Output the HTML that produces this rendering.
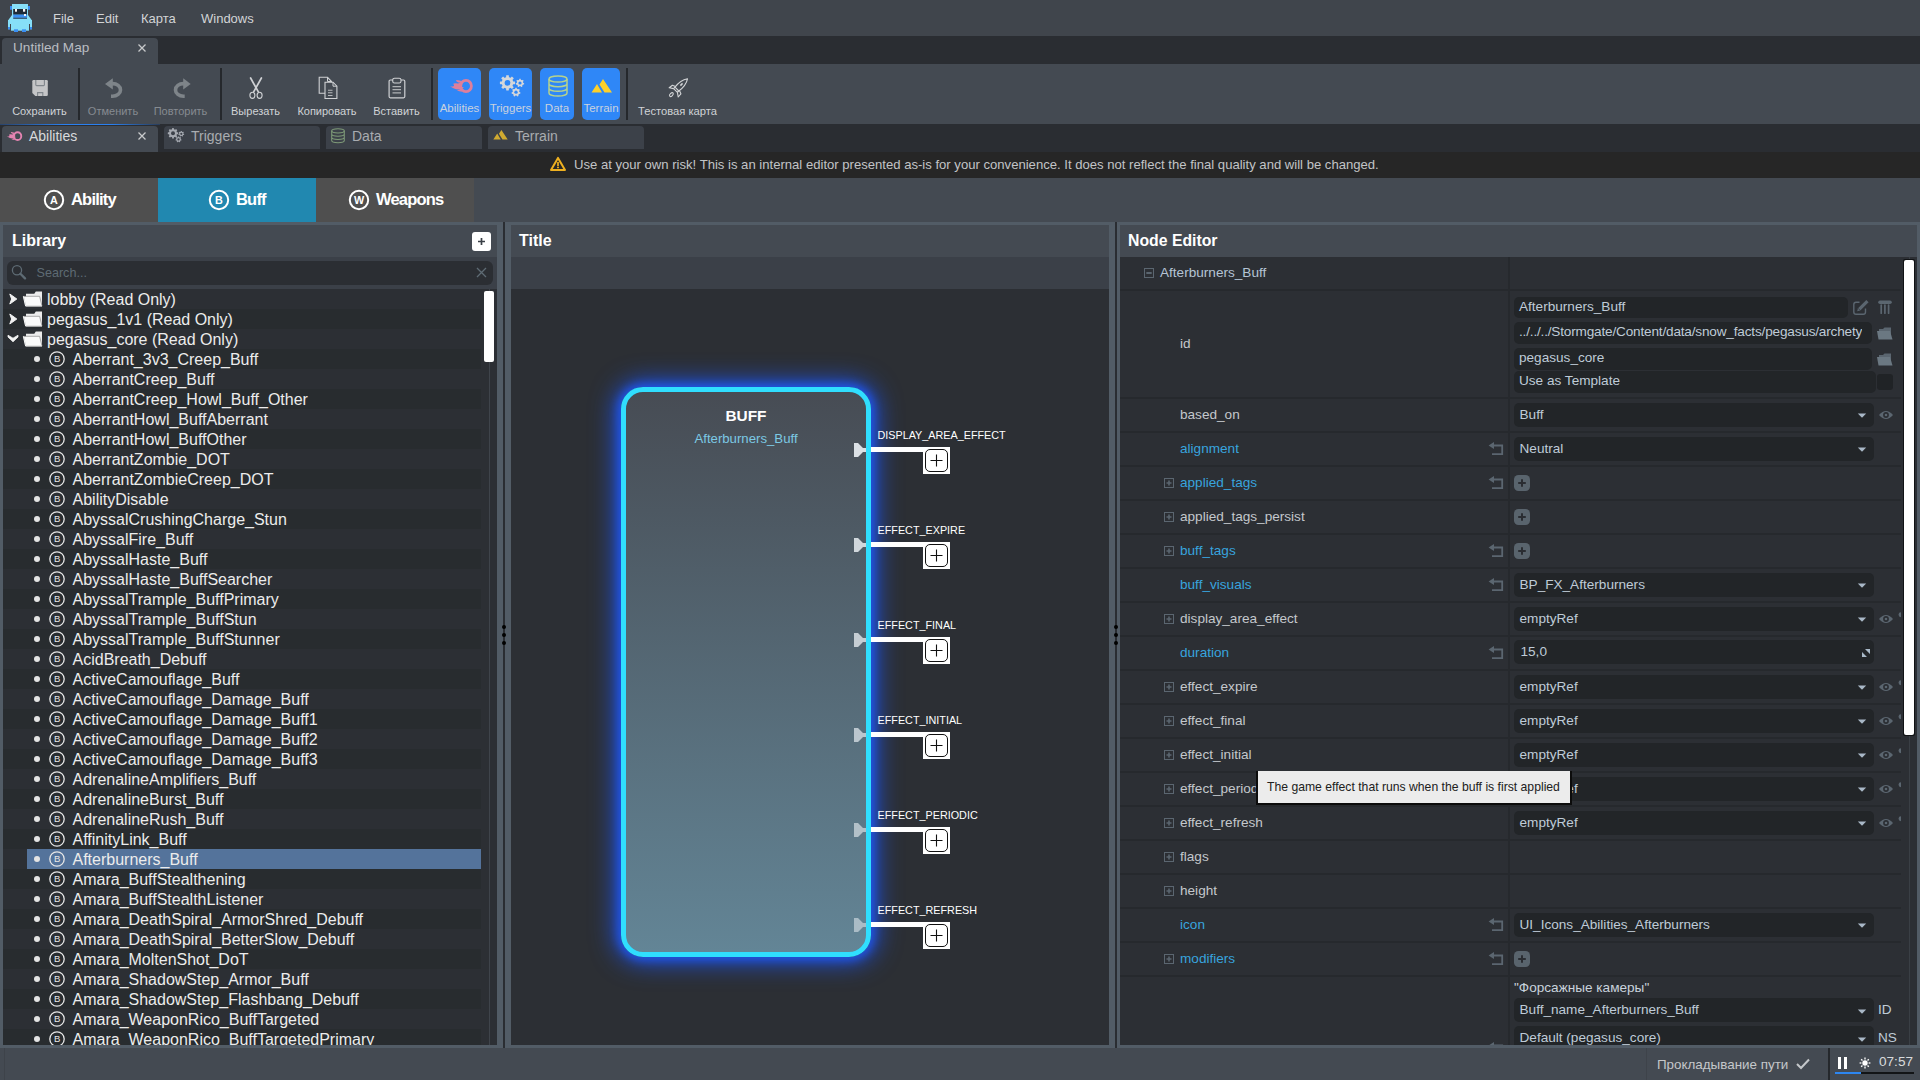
<!DOCTYPE html>
<html><head><meta charset="utf-8"><style>
html,body{margin:0;padding:0;width:1920px;height:1080px;overflow:hidden;background:#444a52;font-family:'Liberation Sans',sans-serif;}
div,svg{box-sizing:content-box}
</style></head><body>
<div style="position:absolute;left:0px;top:0px;width:1920px;height:36px;background:#40454c;"></div><svg style="position:absolute;left:8px;top:3px;" width="24" height="30" viewBox="0 0 24 30"><rect x="2" y="3" width="2" height="3.7" fill="#3a8ef2"/><rect x="20" y="3" width="2" height="3.7" fill="#3a8ef2"/><rect x="4" y="1" width="16" height="16.5" fill="#86dff8"/><polygon points="4,12 4,17.5 0,17.5" fill="#86dff8"/><polygon points="20,12 24,17.5 20,17.5" fill="#86dff8"/><rect x="0" y="17" width="24" height="9.3" fill="#86dff8"/><rect x="3" y="17" width="18" height="10.7" fill="#86dff8"/><rect x="2" y="21" width="1" height="7" fill="#40454c"/><rect x="21" y="21" width="1" height="7" fill="#40454c"/><rect x="0" y="24" width="2" height="2.3" fill="#3a8ef2"/><rect x="22" y="24" width="2" height="2.3" fill="#3a8ef2"/><rect x="6" y="26.3" width="4" height="2.7" fill="#3a8ef2"/><rect x="14" y="26.3" width="4" height="2.7" fill="#3a8ef2"/><rect x="5.2" y="6" width="13.8" height="5.7" fill="#1e2b37"/><rect x="7" y="6" width="2" height="2.7" fill="#f4f4f4"/><rect x="15" y="6" width="2.2" height="2.7" fill="#f4f4f4"/><rect x="5.2" y="11.7" width="13.8" height="3" fill="#3a8ef2"/><rect x="5.2" y="14.7" width="13.8" height="1" fill="#1c2a44"/><rect x="16" y="11" width="2" height="2" fill="#f4f4f4"/></svg><div style="position:absolute;left:53px;top:12.0px;font-size:13px;line-height:1;color:#d2d4d6;font-weight:400;white-space:pre;">File</div><div style="position:absolute;left:96px;top:12.0px;font-size:13px;line-height:1;color:#d2d4d6;font-weight:400;white-space:pre;">Edit</div><div style="position:absolute;left:141px;top:12.0px;font-size:13px;line-height:1;color:#d2d4d6;font-weight:400;white-space:pre;">Карта</div><div style="position:absolute;left:201px;top:12.0px;font-size:13px;line-height:1;color:#d2d4d6;font-weight:400;white-space:pre;">Windows</div><div style="position:absolute;left:0px;top:36px;width:1920px;height:28px;background:#2a2d32;"></div><div style="position:absolute;left:2px;top:38px;width:156px;height:26px;background:#444a52;border-radius:4px 4px 0 0;"></div><div style="position:absolute;left:13px;top:41.49px;font-size:13.6px;line-height:1;color:#b9bdc2;font-weight:400;white-space:pre;">Untitled Map</div><svg style="position:absolute;left:137px;top:42.5px;" width="10" height="10" viewBox="0 0 10 10"><path d="M1.5 1.5L8.5 8.5M8.5 1.5L1.5 8.5" stroke="#c8cacc" stroke-width="1.3"/></svg><div style="position:absolute;left:0px;top:64px;width:1920px;height:60px;background:#444a52;"></div><div style="position:absolute;left:78px;top:68px;width:2px;height:52px;background:#25282c;"></div><div style="position:absolute;left:220px;top:68px;width:2px;height:52px;background:#25282c;"></div><div style="position:absolute;left:431px;top:68px;width:2px;height:52px;background:#25282c;"></div><div style="position:absolute;left:626px;top:68px;width:2px;height:52px;background:#25282c;"></div><div style="position:absolute;left:-160.5px;width:400px;text-align:center;top:105.69px;font-size:11px;line-height:1;color:#d0d3d6;font-weight:400;white-space:pre">Сохранить</div><div style="position:absolute;left:-87.0px;width:400px;text-align:center;top:105.69px;font-size:11px;line-height:1;color:#868b91;font-weight:400;white-space:pre">Отменить</div><div style="position:absolute;left:-19.5px;width:400px;text-align:center;top:105.69px;font-size:11px;line-height:1;color:#868b91;font-weight:400;white-space:pre">Повторить</div><div style="position:absolute;left:55.5px;width:400px;text-align:center;top:105.69px;font-size:11px;line-height:1;color:#d0d3d6;font-weight:400;white-space:pre">Вырезать</div><div style="position:absolute;left:127.0px;width:400px;text-align:center;top:105.69px;font-size:11px;line-height:1;color:#d0d3d6;font-weight:400;white-space:pre">Копировать</div><div style="position:absolute;left:196.5px;width:400px;text-align:center;top:105.69px;font-size:11px;line-height:1;color:#d0d3d6;font-weight:400;white-space:pre">Вставить</div><div style="position:absolute;left:477.5px;width:400px;text-align:center;top:105.52px;font-size:11.2px;line-height:1;color:#d0d3d6;font-weight:400;white-space:pre">Тестовая карта</div><svg style="position:absolute;left:31px;top:79px;" width="18" height="18" viewBox="0 0 18 18"><path d="M1.3 2.2Q1.3 1 2.5 1H15.6Q16.8 1 16.8 2.2V15.8Q16.8 17 15.6 17H4.3L1.3 14Z" fill="#c4c5c7"/><path d="M4.8 1V5.8Q4.8 6.6 5.6 6.6H12.6Q13.4 6.6 13.4 5.8V1" stroke="#80868c" stroke-width="1.1" fill="none"/><path d="M6.6 17V13.6H11.8V17" stroke="#80868c" stroke-width="1.1" fill="none"/></svg><svg style="position:absolute;left:103px;top:76px;" width="24" height="24" viewBox="0 0 24 24"><path d="M7 7.6H9.5A8 6.3 0 0 1 9.5 20.2H8" stroke="#7e8489" stroke-width="3.6" fill="none"/><path d="M2 7.9L9.8 2.2V13.6Z" fill="#7e8489"/></svg><svg style="position:absolute;left:170px;top:76px;" width="24" height="24" viewBox="0 0 24 24"><path d="M16 7.6H13.5A8 6.3 0 0 0 13.5 20.2H14.7" stroke="#7e8489" stroke-width="3.6" fill="none"/><path d="M20.7 7.9L13.2 2.2V13.6Z" fill="#7e8489"/></svg><svg style="position:absolute;left:248px;top:76px;" width="16" height="24" viewBox="0 0 16 24"><path d="M2.6 2L10.2 15.6M13.4 2L5.8 15.6" stroke="#cfd1d4" stroke-width="1.7" stroke-linecap="round"/><ellipse cx="4.4" cy="19.3" rx="2.5" ry="3.1" stroke="#cfd1d4" stroke-width="1.1" fill="none"/><ellipse cx="11.6" cy="19.3" rx="2.5" ry="3.1" stroke="#cfd1d4" stroke-width="1.1" fill="none"/></svg><svg style="position:absolute;left:318px;top:76px;" width="20" height="24" viewBox="0 0 20 24"><path d="M1.2 1.3H9.5L13.6 5.5V17.2H1.2Z" stroke="#cfd1d4" stroke-width="1.1" fill="#444a52"/><path d="M9.5 1.3V5.5H13.6" stroke="#cfd1d4" stroke-width="1" fill="none"/><path d="M7 6.2H15L18.9 10.2V22.5H7Z" stroke="#cfd1d4" stroke-width="1.1" fill="#444a52"/><path d="M15 6.2V10.2H18.9" stroke="#cfd1d4" stroke-width="1" fill="none"/><path d="M10 14.2H14.5M10 16.8H14.5M10 19.5H14.5" stroke="#b6b9bc" stroke-width="1.1"/></svg><svg style="position:absolute;left:388px;top:77px;" width="18" height="22" viewBox="0 0 18 22"><rect x="1.1" y="3" width="15.7" height="17.8" rx="1.2" stroke="#cfd1d4" stroke-width="1.2" fill="none"/><rect x="4.7" y="1.2" width="8.3" height="4.8" rx="1.8" stroke="#cfd1d4" stroke-width="1.1" fill="#444a52"/><path d="M4.5 9.6H13M4.5 12.7H13M4.5 15.8H13" stroke="#aeb1b4" stroke-width="1.2"/></svg><div style="position:absolute;left:438px;top:68px;width:43px;height:52px;background:#2f87f7;border-radius:5px;"></div><div style="position:absolute;left:489px;top:68px;width:43px;height:52px;background:#2f87f7;border-radius:5px;"></div><div style="position:absolute;left:540px;top:68px;width:34px;height:52px;background:#2f87f7;border-radius:5px;"></div><div style="position:absolute;left:582px;top:68px;width:38px;height:52px;background:#2f87f7;border-radius:5px;"></div><div style="position:absolute;left:259.5px;width:400px;text-align:center;top:103.27px;font-size:11.5px;line-height:1;color:#c9d2de;font-weight:400;white-space:pre">Abilities</div><div style="position:absolute;left:310.5px;width:400px;text-align:center;top:103.27px;font-size:11.5px;line-height:1;color:#c9d2de;font-weight:400;white-space:pre">Triggers</div><div style="position:absolute;left:357.0px;width:400px;text-align:center;top:103.27px;font-size:11.5px;line-height:1;color:#c9d2de;font-weight:400;white-space:pre">Data</div><div style="position:absolute;left:401.0px;width:400px;text-align:center;top:103.27px;font-size:11.5px;line-height:1;color:#c9d2de;font-weight:400;white-space:pre">Terrain</div><svg style="position:absolute;left:446px;top:74px;" width="30" height="24" viewBox="0 0 30 24"><g transform="scale(1.0)" fill="#de7f9b"><ellipse cx="20" cy="12" rx="5.4" ry="5.7" stroke="#de7f9b" stroke-width="2.8" fill="none"/><path d="M10 6Q12.5 6.1 15.2 7L14.8 8.8Q12 8.6 10.6 7.4Z"/><path d="M7.5 9.6Q9.5 9.1 12 9.5L14.8 8.6L14.6 15.8L12.6 15.5Q9.5 15.2 8 14.4Q6 13.5 4 12.2Q6 12.5 7.6 12.3Q8.6 11.5 7.6 10.8Z"/><path d="M10.8 16.6Q12.5 16 14.4 15.4L16.2 17.8Q13 17.6 10.8 16.6Z"/><path d="M14.6 10.2L17.2 10.9L14.6 11.8ZM14.6 12.6L18.2 13.4L14.6 14.4Z"/></g></svg><svg style="position:absolute;left:498px;top:74px;" width="30" height="26" viewBox="0 0 30 26"><circle cx="9.5" cy="8.8" r="5.78" fill="#d5d7da"/><rect x="8.13" y="1.20" width="2.74" height="3.80" rx="0.41" fill="#d5d7da" transform="rotate(0.0 9.5 8.8)"/><rect x="8.13" y="1.20" width="2.74" height="3.80" rx="0.41" fill="#d5d7da" transform="rotate(45.0 9.5 8.8)"/><rect x="8.13" y="1.20" width="2.74" height="3.80" rx="0.41" fill="#d5d7da" transform="rotate(90.0 9.5 8.8)"/><rect x="8.13" y="1.20" width="2.74" height="3.80" rx="0.41" fill="#d5d7da" transform="rotate(135.0 9.5 8.8)"/><rect x="8.13" y="1.20" width="2.74" height="3.80" rx="0.41" fill="#d5d7da" transform="rotate(180.0 9.5 8.8)"/><rect x="8.13" y="1.20" width="2.74" height="3.80" rx="0.41" fill="#d5d7da" transform="rotate(225.0 9.5 8.8)"/><rect x="8.13" y="1.20" width="2.74" height="3.80" rx="0.41" fill="#d5d7da" transform="rotate(270.0 9.5 8.8)"/><rect x="8.13" y="1.20" width="2.74" height="3.80" rx="0.41" fill="#d5d7da" transform="rotate(315.0 9.5 8.8)"/><circle cx="9.5" cy="8.8" r="2.89" fill="#2f87f7"/><circle cx="22" cy="9" r="3.19" fill="#d5d7da"/><rect x="21.24" y="4.80" width="1.51" height="2.10" rx="0.23" fill="#d5d7da" transform="rotate(0.0 22 9)"/><rect x="21.24" y="4.80" width="1.51" height="2.10" rx="0.23" fill="#d5d7da" transform="rotate(51.4 22 9)"/><rect x="21.24" y="4.80" width="1.51" height="2.10" rx="0.23" fill="#d5d7da" transform="rotate(102.9 22 9)"/><rect x="21.24" y="4.80" width="1.51" height="2.10" rx="0.23" fill="#d5d7da" transform="rotate(154.3 22 9)"/><rect x="21.24" y="4.80" width="1.51" height="2.10" rx="0.23" fill="#d5d7da" transform="rotate(205.7 22 9)"/><rect x="21.24" y="4.80" width="1.51" height="2.10" rx="0.23" fill="#d5d7da" transform="rotate(257.1 22 9)"/><rect x="21.24" y="4.80" width="1.51" height="2.10" rx="0.23" fill="#d5d7da" transform="rotate(308.6 22 9)"/><circle cx="22" cy="9" r="1.60" fill="#2f87f7"/><circle cx="18" cy="18.2" r="3.34" fill="#d5d7da"/><rect x="17.21" y="13.80" width="1.58" height="2.20" rx="0.24" fill="#d5d7da" transform="rotate(0.0 18 18.2)"/><rect x="17.21" y="13.80" width="1.58" height="2.20" rx="0.24" fill="#d5d7da" transform="rotate(51.4 18 18.2)"/><rect x="17.21" y="13.80" width="1.58" height="2.20" rx="0.24" fill="#d5d7da" transform="rotate(102.9 18 18.2)"/><rect x="17.21" y="13.80" width="1.58" height="2.20" rx="0.24" fill="#d5d7da" transform="rotate(154.3 18 18.2)"/><rect x="17.21" y="13.80" width="1.58" height="2.20" rx="0.24" fill="#d5d7da" transform="rotate(205.7 18 18.2)"/><rect x="17.21" y="13.80" width="1.58" height="2.20" rx="0.24" fill="#d5d7da" transform="rotate(257.1 18 18.2)"/><rect x="17.21" y="13.80" width="1.58" height="2.20" rx="0.24" fill="#d5d7da" transform="rotate(308.6 18 18.2)"/><circle cx="18" cy="18.2" r="1.67" fill="#2f87f7"/></svg><svg style="position:absolute;left:548px;top:75px;" width="21" height="24" viewBox="0 0 21 24"><ellipse cx="10" cy="4" rx="9" ry="3" stroke="#b5d28e" stroke-width="1.5" fill="none"/><path d="M1 4V18A9 3 0 0 0 19 18V16M1 8.7A9 3 0 0 0 19 8.7M1 13.3A9 3 0 0 0 19 13.3M19 4V16" stroke="#b5d28e" stroke-width="1.5" fill="none"/></svg><svg style="position:absolute;left:591px;top:79px;" width="22" height="14" viewBox="0 0 22 14"><path d="M0.5 13.5L6 5L11 13.5Z M8.5 5.5L12 0L21 13.5L13.5 13.5Z" fill="#fdd02b"/></svg><svg style="position:absolute;left:668px;top:78px;" width="21" height="21" viewBox="0 0 21 21"><g stroke="#d2d4d6" stroke-width="1.1" fill="none" stroke-linejoin="round"><path d="M19.5 0.8C15 1.6 10.5 4.6 7 9.2L10.8 13C15.4 9.5 18.6 5.2 19.5 0.8Z"/><path d="M7 9.2L5.6 10.6L9.4 14.4L10.8 13"/><path d="M7.4 8.6L4.4 7.2L1.2 9.8L5.6 10.6"/><path d="M11.4 12.6L12.9 15.8L10.2 19L9.4 14.4"/><ellipse cx="3.4" cy="16.6" rx="2.3" ry="1.3" transform="rotate(-45 3.4 16.6)"/><path d="M12.4 7.6L14.6 5.4" stroke-width="1.5"/></g></svg><div style="position:absolute;left:0px;top:124px;width:1920px;height:28px;background:#2a2d32;"></div><div style="position:absolute;left:0;top:124px;width:160px;height:1px;background:linear-gradient(90deg,rgba(40,120,240,0.3),#2a80f0 40%,#2a80f0 70%,rgba(40,120,240,0.2))"></div><div style="position:absolute;left:2px;top:126px;width:156px;height:26px;background:#444a52;border-radius:4px 4px 0 0;"></div><div style="position:absolute;left:164px;top:126px;width:156px;height:23px;background:#3c4149;border-radius:4px 4px 0 0;"></div><div style="position:absolute;left:326px;top:126px;width:156px;height:23px;background:#3c4149;border-radius:4px 4px 0 0;"></div><div style="position:absolute;left:488px;top:126px;width:156px;height:23px;background:#3c4149;border-radius:4px 4px 0 0;"></div><svg style="position:absolute;left:4px;top:128px;" width="20" height="16" viewBox="0 0 20 16"><g transform="scale(0.68)" fill="#e584b2"><ellipse cx="20" cy="12" rx="5.4" ry="5.7" stroke="#e584b2" stroke-width="2.8" fill="none"/><path d="M10 6Q12.5 6.1 15.2 7L14.8 8.8Q12 8.6 10.6 7.4Z"/><path d="M7.5 9.6Q9.5 9.1 12 9.5L14.8 8.6L14.6 15.8L12.6 15.5Q9.5 15.2 8 14.4Q6 13.5 4 12.2Q6 12.5 7.6 12.3Q8.6 11.5 7.6 10.8Z"/><path d="M10.8 16.6Q12.5 16 14.4 15.4L16.2 17.8Q13 17.6 10.8 16.6Z"/><path d="M14.6 10.2L17.2 10.9L14.6 11.8ZM14.6 12.6L18.2 13.4L14.6 14.4Z"/></g></svg><div style="position:absolute;left:29px;top:129.15px;font-size:14px;line-height:1;color:#d8dadc;font-weight:400;white-space:pre;">Abilities</div><svg style="position:absolute;left:137px;top:130.5px;" width="10" height="10" viewBox="0 0 10 10"><path d="M1.5 1.5L8.5 8.5M8.5 1.5L1.5 8.5" stroke="#c8cacc" stroke-width="1.3"/></svg><svg style="position:absolute;left:166px;top:127px;" width="20" height="17" viewBox="0 0 20 17"><circle cx="7" cy="6.3" r="3.95" fill="#a5a9b0"/><rect x="6.06" y="1.10" width="1.87" height="2.60" rx="0.28" fill="#a5a9b0" transform="rotate(0.0 7 6.3)"/><rect x="6.06" y="1.10" width="1.87" height="2.60" rx="0.28" fill="#a5a9b0" transform="rotate(45.0 7 6.3)"/><rect x="6.06" y="1.10" width="1.87" height="2.60" rx="0.28" fill="#a5a9b0" transform="rotate(90.0 7 6.3)"/><rect x="6.06" y="1.10" width="1.87" height="2.60" rx="0.28" fill="#a5a9b0" transform="rotate(135.0 7 6.3)"/><rect x="6.06" y="1.10" width="1.87" height="2.60" rx="0.28" fill="#a5a9b0" transform="rotate(180.0 7 6.3)"/><rect x="6.06" y="1.10" width="1.87" height="2.60" rx="0.28" fill="#a5a9b0" transform="rotate(225.0 7 6.3)"/><rect x="6.06" y="1.10" width="1.87" height="2.60" rx="0.28" fill="#a5a9b0" transform="rotate(270.0 7 6.3)"/><rect x="6.06" y="1.10" width="1.87" height="2.60" rx="0.28" fill="#a5a9b0" transform="rotate(315.0 7 6.3)"/><circle cx="7" cy="6.3" r="1.98" fill="#3c4149"/><circle cx="15.3" cy="6.8" r="2.20" fill="#a5a9b0"/><rect x="14.78" y="3.90" width="1.04" height="1.45" rx="0.16" fill="#a5a9b0" transform="rotate(0.0 15.3 6.8)"/><rect x="14.78" y="3.90" width="1.04" height="1.45" rx="0.16" fill="#a5a9b0" transform="rotate(51.4 15.3 6.8)"/><rect x="14.78" y="3.90" width="1.04" height="1.45" rx="0.16" fill="#a5a9b0" transform="rotate(102.9 15.3 6.8)"/><rect x="14.78" y="3.90" width="1.04" height="1.45" rx="0.16" fill="#a5a9b0" transform="rotate(154.3 15.3 6.8)"/><rect x="14.78" y="3.90" width="1.04" height="1.45" rx="0.16" fill="#a5a9b0" transform="rotate(205.7 15.3 6.8)"/><rect x="14.78" y="3.90" width="1.04" height="1.45" rx="0.16" fill="#a5a9b0" transform="rotate(257.1 15.3 6.8)"/><rect x="14.78" y="3.90" width="1.04" height="1.45" rx="0.16" fill="#a5a9b0" transform="rotate(308.6 15.3 6.8)"/><circle cx="15.3" cy="6.8" r="1.10" fill="#3c4149"/><circle cx="12.5" cy="12.4" r="2.28" fill="#a5a9b0"/><rect x="11.96" y="9.40" width="1.08" height="1.50" rx="0.16" fill="#a5a9b0" transform="rotate(0.0 12.5 12.4)"/><rect x="11.96" y="9.40" width="1.08" height="1.50" rx="0.16" fill="#a5a9b0" transform="rotate(51.4 12.5 12.4)"/><rect x="11.96" y="9.40" width="1.08" height="1.50" rx="0.16" fill="#a5a9b0" transform="rotate(102.9 12.5 12.4)"/><rect x="11.96" y="9.40" width="1.08" height="1.50" rx="0.16" fill="#a5a9b0" transform="rotate(154.3 12.5 12.4)"/><rect x="11.96" y="9.40" width="1.08" height="1.50" rx="0.16" fill="#a5a9b0" transform="rotate(205.7 12.5 12.4)"/><rect x="11.96" y="9.40" width="1.08" height="1.50" rx="0.16" fill="#a5a9b0" transform="rotate(257.1 12.5 12.4)"/><rect x="11.96" y="9.40" width="1.08" height="1.50" rx="0.16" fill="#a5a9b0" transform="rotate(308.6 12.5 12.4)"/><circle cx="12.5" cy="12.4" r="1.14" fill="#3c4149"/></svg><div style="position:absolute;left:191px;top:129.15px;font-size:14px;line-height:1;color:#a9acb0;font-weight:400;white-space:pre;">Triggers</div><svg style="position:absolute;left:330px;top:127px;" width="16" height="17" viewBox="0 0 16 17"><g transform="translate(1,1) scale(0.7)"><ellipse cx="10" cy="4" rx="9" ry="3" stroke="#7e9a78" stroke-width="1.5" fill="none"/><path d="M1 4V18A9 3 0 0 0 19 18V16M1 8.7A9 3 0 0 0 19 8.7M1 13.3A9 3 0 0 0 19 13.3M19 4V16" stroke="#7e9a78" stroke-width="1.5" fill="none"/></g></svg><div style="position:absolute;left:352px;top:129.15px;font-size:14px;line-height:1;color:#a9acb0;font-weight:400;white-space:pre;">Data</div><svg style="position:absolute;left:493px;top:130px;" width="15" height="10" viewBox="0 0 15 10"><path d="M0.35 9.45L4.199999999999999 3.5L7.699999999999999 9.45Z M5.949999999999999 3.8499999999999996L8.399999999999999 0L14.7 9.45L9.45 9.45Z" fill="#d0aa30"/></svg><div style="position:absolute;left:515px;top:129.15px;font-size:14px;line-height:1;color:#a9acb0;font-weight:400;white-space:pre;">Terrain</div><div style="position:absolute;left:0px;top:152px;width:1920px;height:26px;background:#262626;"></div><svg style="position:absolute;left:549px;top:155px;" width="18" height="17" viewBox="0 0 18 17"><path d="M9 2.9L16 15H2Z" stroke="#eeb020" stroke-width="2" fill="none" stroke-linejoin="round"/><path d="M9 7V11.2" stroke="#eeb020" stroke-width="1.7"/><ellipse cx="9" cy="12.6" rx="1.1" ry="0.8" fill="#eeb020"/></svg><div style="position:absolute;left:574px;top:157.91px;font-size:13.1px;line-height:1;color:#c2c4c6;font-weight:400;white-space:pre;">Use at your own risk! This is an internal editor presented as-is for your convenience. It does not reflect the final quality and will be changed.</div><div style="position:absolute;left:0px;top:178px;width:1920px;height:44px;background:#444a52;"></div><div style="position:absolute;left:0px;top:178px;width:158px;height:44px;background:#4f4f4f;"></div><div style="position:absolute;left:158px;top:178px;width:158px;height:44px;background:#2188b0;"></div><div style="position:absolute;left:316px;top:178px;width:158px;height:44px;background:#4f4f4f;"></div><svg style="position:absolute;left:43px;top:189px;" width="22" height="22" viewBox="0 0 22 22"><circle cx="11" cy="11" r="9.2" stroke="#fff" stroke-width="2" fill="none"/><text x="11" y="14.9" text-anchor="middle" font-family="Liberation Sans" font-size="10.8" font-weight="700" fill="#fff">A</text></svg><div style="position:absolute;left:71px;top:191.03px;font-size:16.5px;line-height:1;color:#ffffff;font-weight:700;white-space:pre;letter-spacing:-0.8px;">Ability</div><svg style="position:absolute;left:208px;top:189px;" width="22" height="22" viewBox="0 0 22 22"><circle cx="11" cy="11" r="9.2" stroke="#fff" stroke-width="2" fill="none"/><text x="11" y="14.9" text-anchor="middle" font-family="Liberation Sans" font-size="10.8" font-weight="700" fill="#fff">B</text></svg><div style="position:absolute;left:236px;top:191.03px;font-size:16.5px;line-height:1;color:#ffffff;font-weight:700;white-space:pre;letter-spacing:-0.8px;">Buff</div><svg style="position:absolute;left:348px;top:189px;" width="22" height="22" viewBox="0 0 22 22"><circle cx="11" cy="11" r="9.2" stroke="#fff" stroke-width="2" fill="none"/><text x="11" y="14.9" text-anchor="middle" font-family="Liberation Sans" font-size="10.8" font-weight="700" fill="#fff">W</text></svg><div style="position:absolute;left:376px;top:191.03px;font-size:16.5px;line-height:1;color:#ffffff;font-weight:700;white-space:pre;letter-spacing:-0.8px;">Weapons</div><div style="position:absolute;left:0px;top:222px;width:1920px;height:826px;background:#525c66;"></div><div style="position:absolute;left:503px;top:222px;width:2px;height:826px;background:#2a2d32;"></div><div style="position:absolute;left:1115px;top:222px;width:2px;height:826px;background:#2a2d32;"></div><div style="position:absolute;left:502px;top:625px;width:4px;height:4px;background:#000;border-radius:50%;"></div><div style="position:absolute;left:1114px;top:625px;width:4px;height:4px;background:#000;border-radius:50%;"></div><div style="position:absolute;left:502px;top:633px;width:4px;height:4px;background:#000;border-radius:50%;"></div><div style="position:absolute;left:1114px;top:633px;width:4px;height:4px;background:#000;border-radius:50%;"></div><div style="position:absolute;left:502px;top:641px;width:4px;height:4px;background:#000;border-radius:50%;"></div><div style="position:absolute;left:1114px;top:641px;width:4px;height:4px;background:#000;border-radius:50%;"></div><div style="position:absolute;left:3px;top:225px;width:494px;height:32px;background:#444a52;"></div><div style="position:absolute;left:12px;top:233.46px;font-size:16px;line-height:1;color:#ffffff;font-weight:700;white-space:pre;">Library</div><div style="position:absolute;left:472px;top:232px;width:19px;height:19px;background:#ffffff;border-radius:3px;"></div><svg style="position:absolute;left:472px;top:232px;" width="19" height="19" viewBox="0 0 19 19"><path d="M9.5 6V13M6 9.5H13" stroke="#3a3f46" stroke-width="1.7"/></svg><div style="position:absolute;left:3px;top:257px;width:494px;height:32px;background:#3b4048;"></div><div style="position:absolute;left:7px;top:261px;width:486px;height:24px;background:#2b2e33;border-radius:6px;"></div><svg style="position:absolute;left:11px;top:264px;" width="16" height="16" viewBox="0 0 16 16"><circle cx="6" cy="6.2" r="4.6" stroke="#5e6b74" stroke-width="1.3" fill="none"/><path d="M9.4 9.8L14 14.4" stroke="#5e6b74" stroke-width="2.3" stroke-linecap="round"/></svg><div style="position:absolute;left:36.5px;top:267.33px;font-size:12.6px;line-height:1;color:#5e6b74;font-weight:400;white-space:pre;">Search...</div><svg style="position:absolute;left:476px;top:267px;" width="11" height="11" viewBox="0 0 11 11"><path d="M1 1L10 10M10 1L1 10" stroke="#5e6b74" stroke-width="1.3"/></svg><div style="position:absolute;left:3px;top:289px;width:494px;height:756px;background:#2c2f34;"></div><div style="position:absolute;left:3px;top:289px;width:494px;height:756px;overflow:hidden"><div style="position:absolute;left:0;top:0px;width:478px;height:20px;background:#2c2f34"></div><svg style="position:absolute;left:6px;top:4px" width="10" height="12"><path d="M0.8 1L7.8 6L0.8 11L2.6 6Z" fill="#f2f2f2" stroke="#f2f2f2" stroke-width="1" stroke-linejoin="round"/></svg><svg style="position:absolute;left:17px;top:2px" width="23" height="17"><path d="M6 14V2.7H14.3L15.8 0.4H22V14Z" fill="#ececec"/><path d="M3.4 5.3H19.6L22 15H5.6Z" fill="#fafafa" stroke="#8a8a8a" stroke-width="0.7"/><path d="M3.4 5.3L5.6 15H22" stroke="#fafafa" stroke-width="1" fill="none"/></svg><div style="position:absolute;left:44px;top:3.26px;font-size:16px;line-height:1;color:#ececec;white-space:pre">lobby (Read Only)</div><div style="position:absolute;left:0;top:20px;width:478px;height:20px;background:#282c2f"></div><svg style="position:absolute;left:6px;top:24px" width="10" height="12"><path d="M0.8 1L7.8 6L0.8 11L2.6 6Z" fill="#f2f2f2" stroke="#f2f2f2" stroke-width="1" stroke-linejoin="round"/></svg><svg style="position:absolute;left:17px;top:22px" width="23" height="17"><path d="M6 14V2.7H14.3L15.8 0.4H22V14Z" fill="#ececec"/><path d="M3.4 5.3H19.6L22 15H5.6Z" fill="#fafafa" stroke="#8a8a8a" stroke-width="0.7"/><path d="M3.4 5.3L5.6 15H22" stroke="#fafafa" stroke-width="1" fill="none"/></svg><div style="position:absolute;left:44px;top:23.26px;font-size:16px;line-height:1;color:#ececec;white-space:pre">pegasus_1v1 (Read Only)</div><div style="position:absolute;left:0;top:40px;width:478px;height:20px;background:#2c2f34"></div><svg style="position:absolute;left:4px;top:45px" width="12" height="9"><path d="M1 1.2L6 4.2L11 1.2V3L6 7.8L1 3Z" fill="#f4f4f4" stroke="#f4f4f4" stroke-width="0.8" stroke-linejoin="round"/></svg><svg style="position:absolute;left:17px;top:42px" width="23" height="17"><path d="M6 14V2.7H14.3L15.8 0.4H22V14Z" fill="#ececec"/><path d="M3.4 5.3H19.6L22 15H5.6Z" fill="#fafafa" stroke="#8a8a8a" stroke-width="0.7"/><path d="M3.4 5.3L5.6 15H22" stroke="#fafafa" stroke-width="1" fill="none"/></svg><div style="position:absolute;left:44px;top:43.26px;font-size:16px;line-height:1;color:#ececec;white-space:pre">pegasus_core (Read Only)</div><div style="position:absolute;left:0;top:60px;width:478px;height:20px;background:#282c2f"></div><div style="position:absolute;left:31px;top:67px;width:6px;height:6px;border-radius:50%;background:#e4e4e4"></div><svg style="position:absolute;left:46px;top:62px" width="16" height="16"><circle cx="8" cy="8" r="7.2" stroke="#e8e8e8" stroke-width="1.3" fill="none"/><text x="8.1" y="11.4" text-anchor="middle" font-family="Liberation Sans" font-size="9.5" font-weight="400" fill="#e8e8e8">B</text></svg><div style="position:absolute;left:69.5px;top:63.26px;font-size:16px;line-height:1;color:#ececec;white-space:pre">Aberrant_3v3_Creep_Buff</div><div style="position:absolute;left:0;top:80px;width:478px;height:20px;background:#2c2f34"></div><div style="position:absolute;left:31px;top:87px;width:6px;height:6px;border-radius:50%;background:#e4e4e4"></div><svg style="position:absolute;left:46px;top:82px" width="16" height="16"><circle cx="8" cy="8" r="7.2" stroke="#e8e8e8" stroke-width="1.3" fill="none"/><text x="8.1" y="11.4" text-anchor="middle" font-family="Liberation Sans" font-size="9.5" font-weight="400" fill="#e8e8e8">B</text></svg><div style="position:absolute;left:69.5px;top:83.26px;font-size:16px;line-height:1;color:#ececec;white-space:pre">AberrantCreep_Buff</div><div style="position:absolute;left:0;top:100px;width:478px;height:20px;background:#282c2f"></div><div style="position:absolute;left:31px;top:107px;width:6px;height:6px;border-radius:50%;background:#e4e4e4"></div><svg style="position:absolute;left:46px;top:102px" width="16" height="16"><circle cx="8" cy="8" r="7.2" stroke="#e8e8e8" stroke-width="1.3" fill="none"/><text x="8.1" y="11.4" text-anchor="middle" font-family="Liberation Sans" font-size="9.5" font-weight="400" fill="#e8e8e8">B</text></svg><div style="position:absolute;left:69.5px;top:103.26px;font-size:16px;line-height:1;color:#ececec;white-space:pre">AberrantCreep_Howl_Buff_Other</div><div style="position:absolute;left:0;top:120px;width:478px;height:20px;background:#2c2f34"></div><div style="position:absolute;left:31px;top:127px;width:6px;height:6px;border-radius:50%;background:#e4e4e4"></div><svg style="position:absolute;left:46px;top:122px" width="16" height="16"><circle cx="8" cy="8" r="7.2" stroke="#e8e8e8" stroke-width="1.3" fill="none"/><text x="8.1" y="11.4" text-anchor="middle" font-family="Liberation Sans" font-size="9.5" font-weight="400" fill="#e8e8e8">B</text></svg><div style="position:absolute;left:69.5px;top:123.26px;font-size:16px;line-height:1;color:#ececec;white-space:pre">AberrantHowl_BuffAberrant</div><div style="position:absolute;left:0;top:140px;width:478px;height:20px;background:#282c2f"></div><div style="position:absolute;left:31px;top:147px;width:6px;height:6px;border-radius:50%;background:#e4e4e4"></div><svg style="position:absolute;left:46px;top:142px" width="16" height="16"><circle cx="8" cy="8" r="7.2" stroke="#e8e8e8" stroke-width="1.3" fill="none"/><text x="8.1" y="11.4" text-anchor="middle" font-family="Liberation Sans" font-size="9.5" font-weight="400" fill="#e8e8e8">B</text></svg><div style="position:absolute;left:69.5px;top:143.26px;font-size:16px;line-height:1;color:#ececec;white-space:pre">AberrantHowl_BuffOther</div><div style="position:absolute;left:0;top:160px;width:478px;height:20px;background:#2c2f34"></div><div style="position:absolute;left:31px;top:167px;width:6px;height:6px;border-radius:50%;background:#e4e4e4"></div><svg style="position:absolute;left:46px;top:162px" width="16" height="16"><circle cx="8" cy="8" r="7.2" stroke="#e8e8e8" stroke-width="1.3" fill="none"/><text x="8.1" y="11.4" text-anchor="middle" font-family="Liberation Sans" font-size="9.5" font-weight="400" fill="#e8e8e8">B</text></svg><div style="position:absolute;left:69.5px;top:163.26px;font-size:16px;line-height:1;color:#ececec;white-space:pre">AberrantZombie_DOT</div><div style="position:absolute;left:0;top:180px;width:478px;height:20px;background:#282c2f"></div><div style="position:absolute;left:31px;top:187px;width:6px;height:6px;border-radius:50%;background:#e4e4e4"></div><svg style="position:absolute;left:46px;top:182px" width="16" height="16"><circle cx="8" cy="8" r="7.2" stroke="#e8e8e8" stroke-width="1.3" fill="none"/><text x="8.1" y="11.4" text-anchor="middle" font-family="Liberation Sans" font-size="9.5" font-weight="400" fill="#e8e8e8">B</text></svg><div style="position:absolute;left:69.5px;top:183.26px;font-size:16px;line-height:1;color:#ececec;white-space:pre">AberrantZombieCreep_DOT</div><div style="position:absolute;left:0;top:200px;width:478px;height:20px;background:#2c2f34"></div><div style="position:absolute;left:31px;top:207px;width:6px;height:6px;border-radius:50%;background:#e4e4e4"></div><svg style="position:absolute;left:46px;top:202px" width="16" height="16"><circle cx="8" cy="8" r="7.2" stroke="#e8e8e8" stroke-width="1.3" fill="none"/><text x="8.1" y="11.4" text-anchor="middle" font-family="Liberation Sans" font-size="9.5" font-weight="400" fill="#e8e8e8">B</text></svg><div style="position:absolute;left:69.5px;top:203.26px;font-size:16px;line-height:1;color:#ececec;white-space:pre">AbilityDisable</div><div style="position:absolute;left:0;top:220px;width:478px;height:20px;background:#282c2f"></div><div style="position:absolute;left:31px;top:227px;width:6px;height:6px;border-radius:50%;background:#e4e4e4"></div><svg style="position:absolute;left:46px;top:222px" width="16" height="16"><circle cx="8" cy="8" r="7.2" stroke="#e8e8e8" stroke-width="1.3" fill="none"/><text x="8.1" y="11.4" text-anchor="middle" font-family="Liberation Sans" font-size="9.5" font-weight="400" fill="#e8e8e8">B</text></svg><div style="position:absolute;left:69.5px;top:223.26px;font-size:16px;line-height:1;color:#ececec;white-space:pre">AbyssalCrushingCharge_Stun</div><div style="position:absolute;left:0;top:240px;width:478px;height:20px;background:#2c2f34"></div><div style="position:absolute;left:31px;top:247px;width:6px;height:6px;border-radius:50%;background:#e4e4e4"></div><svg style="position:absolute;left:46px;top:242px" width="16" height="16"><circle cx="8" cy="8" r="7.2" stroke="#e8e8e8" stroke-width="1.3" fill="none"/><text x="8.1" y="11.4" text-anchor="middle" font-family="Liberation Sans" font-size="9.5" font-weight="400" fill="#e8e8e8">B</text></svg><div style="position:absolute;left:69.5px;top:243.26px;font-size:16px;line-height:1;color:#ececec;white-space:pre">AbyssalFire_Buff</div><div style="position:absolute;left:0;top:260px;width:478px;height:20px;background:#282c2f"></div><div style="position:absolute;left:31px;top:267px;width:6px;height:6px;border-radius:50%;background:#e4e4e4"></div><svg style="position:absolute;left:46px;top:262px" width="16" height="16"><circle cx="8" cy="8" r="7.2" stroke="#e8e8e8" stroke-width="1.3" fill="none"/><text x="8.1" y="11.4" text-anchor="middle" font-family="Liberation Sans" font-size="9.5" font-weight="400" fill="#e8e8e8">B</text></svg><div style="position:absolute;left:69.5px;top:263.26px;font-size:16px;line-height:1;color:#ececec;white-space:pre">AbyssalHaste_Buff</div><div style="position:absolute;left:0;top:280px;width:478px;height:20px;background:#2c2f34"></div><div style="position:absolute;left:31px;top:287px;width:6px;height:6px;border-radius:50%;background:#e4e4e4"></div><svg style="position:absolute;left:46px;top:282px" width="16" height="16"><circle cx="8" cy="8" r="7.2" stroke="#e8e8e8" stroke-width="1.3" fill="none"/><text x="8.1" y="11.4" text-anchor="middle" font-family="Liberation Sans" font-size="9.5" font-weight="400" fill="#e8e8e8">B</text></svg><div style="position:absolute;left:69.5px;top:283.26px;font-size:16px;line-height:1;color:#ececec;white-space:pre">AbyssalHaste_BuffSearcher</div><div style="position:absolute;left:0;top:300px;width:478px;height:20px;background:#282c2f"></div><div style="position:absolute;left:31px;top:307px;width:6px;height:6px;border-radius:50%;background:#e4e4e4"></div><svg style="position:absolute;left:46px;top:302px" width="16" height="16"><circle cx="8" cy="8" r="7.2" stroke="#e8e8e8" stroke-width="1.3" fill="none"/><text x="8.1" y="11.4" text-anchor="middle" font-family="Liberation Sans" font-size="9.5" font-weight="400" fill="#e8e8e8">B</text></svg><div style="position:absolute;left:69.5px;top:303.26px;font-size:16px;line-height:1;color:#ececec;white-space:pre">AbyssalTrample_BuffPrimary</div><div style="position:absolute;left:0;top:320px;width:478px;height:20px;background:#2c2f34"></div><div style="position:absolute;left:31px;top:327px;width:6px;height:6px;border-radius:50%;background:#e4e4e4"></div><svg style="position:absolute;left:46px;top:322px" width="16" height="16"><circle cx="8" cy="8" r="7.2" stroke="#e8e8e8" stroke-width="1.3" fill="none"/><text x="8.1" y="11.4" text-anchor="middle" font-family="Liberation Sans" font-size="9.5" font-weight="400" fill="#e8e8e8">B</text></svg><div style="position:absolute;left:69.5px;top:323.26px;font-size:16px;line-height:1;color:#ececec;white-space:pre">AbyssalTrample_BuffStun</div><div style="position:absolute;left:0;top:340px;width:478px;height:20px;background:#282c2f"></div><div style="position:absolute;left:31px;top:347px;width:6px;height:6px;border-radius:50%;background:#e4e4e4"></div><svg style="position:absolute;left:46px;top:342px" width="16" height="16"><circle cx="8" cy="8" r="7.2" stroke="#e8e8e8" stroke-width="1.3" fill="none"/><text x="8.1" y="11.4" text-anchor="middle" font-family="Liberation Sans" font-size="9.5" font-weight="400" fill="#e8e8e8">B</text></svg><div style="position:absolute;left:69.5px;top:343.26px;font-size:16px;line-height:1;color:#ececec;white-space:pre">AbyssalTrample_BuffStunner</div><div style="position:absolute;left:0;top:360px;width:478px;height:20px;background:#2c2f34"></div><div style="position:absolute;left:31px;top:367px;width:6px;height:6px;border-radius:50%;background:#e4e4e4"></div><svg style="position:absolute;left:46px;top:362px" width="16" height="16"><circle cx="8" cy="8" r="7.2" stroke="#e8e8e8" stroke-width="1.3" fill="none"/><text x="8.1" y="11.4" text-anchor="middle" font-family="Liberation Sans" font-size="9.5" font-weight="400" fill="#e8e8e8">B</text></svg><div style="position:absolute;left:69.5px;top:363.26px;font-size:16px;line-height:1;color:#ececec;white-space:pre">AcidBreath_Debuff</div><div style="position:absolute;left:0;top:380px;width:478px;height:20px;background:#282c2f"></div><div style="position:absolute;left:31px;top:387px;width:6px;height:6px;border-radius:50%;background:#e4e4e4"></div><svg style="position:absolute;left:46px;top:382px" width="16" height="16"><circle cx="8" cy="8" r="7.2" stroke="#e8e8e8" stroke-width="1.3" fill="none"/><text x="8.1" y="11.4" text-anchor="middle" font-family="Liberation Sans" font-size="9.5" font-weight="400" fill="#e8e8e8">B</text></svg><div style="position:absolute;left:69.5px;top:383.26px;font-size:16px;line-height:1;color:#ececec;white-space:pre">ActiveCamouflage_Buff</div><div style="position:absolute;left:0;top:400px;width:478px;height:20px;background:#2c2f34"></div><div style="position:absolute;left:31px;top:407px;width:6px;height:6px;border-radius:50%;background:#e4e4e4"></div><svg style="position:absolute;left:46px;top:402px" width="16" height="16"><circle cx="8" cy="8" r="7.2" stroke="#e8e8e8" stroke-width="1.3" fill="none"/><text x="8.1" y="11.4" text-anchor="middle" font-family="Liberation Sans" font-size="9.5" font-weight="400" fill="#e8e8e8">B</text></svg><div style="position:absolute;left:69.5px;top:403.26px;font-size:16px;line-height:1;color:#ececec;white-space:pre">ActiveCamouflage_Damage_Buff</div><div style="position:absolute;left:0;top:420px;width:478px;height:20px;background:#282c2f"></div><div style="position:absolute;left:31px;top:427px;width:6px;height:6px;border-radius:50%;background:#e4e4e4"></div><svg style="position:absolute;left:46px;top:422px" width="16" height="16"><circle cx="8" cy="8" r="7.2" stroke="#e8e8e8" stroke-width="1.3" fill="none"/><text x="8.1" y="11.4" text-anchor="middle" font-family="Liberation Sans" font-size="9.5" font-weight="400" fill="#e8e8e8">B</text></svg><div style="position:absolute;left:69.5px;top:423.26px;font-size:16px;line-height:1;color:#ececec;white-space:pre">ActiveCamouflage_Damage_Buff1</div><div style="position:absolute;left:0;top:440px;width:478px;height:20px;background:#2c2f34"></div><div style="position:absolute;left:31px;top:447px;width:6px;height:6px;border-radius:50%;background:#e4e4e4"></div><svg style="position:absolute;left:46px;top:442px" width="16" height="16"><circle cx="8" cy="8" r="7.2" stroke="#e8e8e8" stroke-width="1.3" fill="none"/><text x="8.1" y="11.4" text-anchor="middle" font-family="Liberation Sans" font-size="9.5" font-weight="400" fill="#e8e8e8">B</text></svg><div style="position:absolute;left:69.5px;top:443.26px;font-size:16px;line-height:1;color:#ececec;white-space:pre">ActiveCamouflage_Damage_Buff2</div><div style="position:absolute;left:0;top:460px;width:478px;height:20px;background:#282c2f"></div><div style="position:absolute;left:31px;top:467px;width:6px;height:6px;border-radius:50%;background:#e4e4e4"></div><svg style="position:absolute;left:46px;top:462px" width="16" height="16"><circle cx="8" cy="8" r="7.2" stroke="#e8e8e8" stroke-width="1.3" fill="none"/><text x="8.1" y="11.4" text-anchor="middle" font-family="Liberation Sans" font-size="9.5" font-weight="400" fill="#e8e8e8">B</text></svg><div style="position:absolute;left:69.5px;top:463.26px;font-size:16px;line-height:1;color:#ececec;white-space:pre">ActiveCamouflage_Damage_Buff3</div><div style="position:absolute;left:0;top:480px;width:478px;height:20px;background:#2c2f34"></div><div style="position:absolute;left:31px;top:487px;width:6px;height:6px;border-radius:50%;background:#e4e4e4"></div><svg style="position:absolute;left:46px;top:482px" width="16" height="16"><circle cx="8" cy="8" r="7.2" stroke="#e8e8e8" stroke-width="1.3" fill="none"/><text x="8.1" y="11.4" text-anchor="middle" font-family="Liberation Sans" font-size="9.5" font-weight="400" fill="#e8e8e8">B</text></svg><div style="position:absolute;left:69.5px;top:483.26px;font-size:16px;line-height:1;color:#ececec;white-space:pre">AdrenalineAmplifiers_Buff</div><div style="position:absolute;left:0;top:500px;width:478px;height:20px;background:#282c2f"></div><div style="position:absolute;left:31px;top:507px;width:6px;height:6px;border-radius:50%;background:#e4e4e4"></div><svg style="position:absolute;left:46px;top:502px" width="16" height="16"><circle cx="8" cy="8" r="7.2" stroke="#e8e8e8" stroke-width="1.3" fill="none"/><text x="8.1" y="11.4" text-anchor="middle" font-family="Liberation Sans" font-size="9.5" font-weight="400" fill="#e8e8e8">B</text></svg><div style="position:absolute;left:69.5px;top:503.26px;font-size:16px;line-height:1;color:#ececec;white-space:pre">AdrenalineBurst_Buff</div><div style="position:absolute;left:0;top:520px;width:478px;height:20px;background:#2c2f34"></div><div style="position:absolute;left:31px;top:527px;width:6px;height:6px;border-radius:50%;background:#e4e4e4"></div><svg style="position:absolute;left:46px;top:522px" width="16" height="16"><circle cx="8" cy="8" r="7.2" stroke="#e8e8e8" stroke-width="1.3" fill="none"/><text x="8.1" y="11.4" text-anchor="middle" font-family="Liberation Sans" font-size="9.5" font-weight="400" fill="#e8e8e8">B</text></svg><div style="position:absolute;left:69.5px;top:523.26px;font-size:16px;line-height:1;color:#ececec;white-space:pre">AdrenalineRush_Buff</div><div style="position:absolute;left:0;top:540px;width:478px;height:20px;background:#282c2f"></div><div style="position:absolute;left:31px;top:547px;width:6px;height:6px;border-radius:50%;background:#e4e4e4"></div><svg style="position:absolute;left:46px;top:542px" width="16" height="16"><circle cx="8" cy="8" r="7.2" stroke="#e8e8e8" stroke-width="1.3" fill="none"/><text x="8.1" y="11.4" text-anchor="middle" font-family="Liberation Sans" font-size="9.5" font-weight="400" fill="#e8e8e8">B</text></svg><div style="position:absolute;left:69.5px;top:543.26px;font-size:16px;line-height:1;color:#ececec;white-space:pre">AffinityLink_Buff</div><div style="position:absolute;left:0;top:560px;width:478px;height:20px;background:#2c2f34"></div><div style="position:absolute;left:24px;top:560px;width:454px;height:20px;background:#54739b"></div><div style="position:absolute;left:31px;top:567px;width:6px;height:6px;border-radius:50%;background:#e4e4e4"></div><svg style="position:absolute;left:46px;top:562px" width="16" height="16"><circle cx="8" cy="8" r="7.2" stroke="#e8e8e8" stroke-width="1.3" fill="none"/><text x="8.1" y="11.4" text-anchor="middle" font-family="Liberation Sans" font-size="9.5" font-weight="400" fill="#e8e8e8">B</text></svg><div style="position:absolute;left:69.5px;top:563.26px;font-size:16px;line-height:1;color:#ececec;white-space:pre">Afterburners_Buff</div><div style="position:absolute;left:0;top:580px;width:478px;height:20px;background:#282c2f"></div><div style="position:absolute;left:31px;top:587px;width:6px;height:6px;border-radius:50%;background:#e4e4e4"></div><svg style="position:absolute;left:46px;top:582px" width="16" height="16"><circle cx="8" cy="8" r="7.2" stroke="#e8e8e8" stroke-width="1.3" fill="none"/><text x="8.1" y="11.4" text-anchor="middle" font-family="Liberation Sans" font-size="9.5" font-weight="400" fill="#e8e8e8">B</text></svg><div style="position:absolute;left:69.5px;top:583.26px;font-size:16px;line-height:1;color:#ececec;white-space:pre">Amara_BuffStealthening</div><div style="position:absolute;left:0;top:600px;width:478px;height:20px;background:#2c2f34"></div><div style="position:absolute;left:31px;top:607px;width:6px;height:6px;border-radius:50%;background:#e4e4e4"></div><svg style="position:absolute;left:46px;top:602px" width="16" height="16"><circle cx="8" cy="8" r="7.2" stroke="#e8e8e8" stroke-width="1.3" fill="none"/><text x="8.1" y="11.4" text-anchor="middle" font-family="Liberation Sans" font-size="9.5" font-weight="400" fill="#e8e8e8">B</text></svg><div style="position:absolute;left:69.5px;top:603.26px;font-size:16px;line-height:1;color:#ececec;white-space:pre">Amara_BuffStealthListener</div><div style="position:absolute;left:0;top:620px;width:478px;height:20px;background:#282c2f"></div><div style="position:absolute;left:31px;top:627px;width:6px;height:6px;border-radius:50%;background:#e4e4e4"></div><svg style="position:absolute;left:46px;top:622px" width="16" height="16"><circle cx="8" cy="8" r="7.2" stroke="#e8e8e8" stroke-width="1.3" fill="none"/><text x="8.1" y="11.4" text-anchor="middle" font-family="Liberation Sans" font-size="9.5" font-weight="400" fill="#e8e8e8">B</text></svg><div style="position:absolute;left:69.5px;top:623.26px;font-size:16px;line-height:1;color:#ececec;white-space:pre">Amara_DeathSpiral_ArmorShred_Debuff</div><div style="position:absolute;left:0;top:640px;width:478px;height:20px;background:#2c2f34"></div><div style="position:absolute;left:31px;top:647px;width:6px;height:6px;border-radius:50%;background:#e4e4e4"></div><svg style="position:absolute;left:46px;top:642px" width="16" height="16"><circle cx="8" cy="8" r="7.2" stroke="#e8e8e8" stroke-width="1.3" fill="none"/><text x="8.1" y="11.4" text-anchor="middle" font-family="Liberation Sans" font-size="9.5" font-weight="400" fill="#e8e8e8">B</text></svg><div style="position:absolute;left:69.5px;top:643.26px;font-size:16px;line-height:1;color:#ececec;white-space:pre">Amara_DeathSpiral_BetterSlow_Debuff</div><div style="position:absolute;left:0;top:660px;width:478px;height:20px;background:#282c2f"></div><div style="position:absolute;left:31px;top:667px;width:6px;height:6px;border-radius:50%;background:#e4e4e4"></div><svg style="position:absolute;left:46px;top:662px" width="16" height="16"><circle cx="8" cy="8" r="7.2" stroke="#e8e8e8" stroke-width="1.3" fill="none"/><text x="8.1" y="11.4" text-anchor="middle" font-family="Liberation Sans" font-size="9.5" font-weight="400" fill="#e8e8e8">B</text></svg><div style="position:absolute;left:69.5px;top:663.26px;font-size:16px;line-height:1;color:#ececec;white-space:pre">Amara_MoltenShot_DoT</div><div style="position:absolute;left:0;top:680px;width:478px;height:20px;background:#2c2f34"></div><div style="position:absolute;left:31px;top:687px;width:6px;height:6px;border-radius:50%;background:#e4e4e4"></div><svg style="position:absolute;left:46px;top:682px" width="16" height="16"><circle cx="8" cy="8" r="7.2" stroke="#e8e8e8" stroke-width="1.3" fill="none"/><text x="8.1" y="11.4" text-anchor="middle" font-family="Liberation Sans" font-size="9.5" font-weight="400" fill="#e8e8e8">B</text></svg><div style="position:absolute;left:69.5px;top:683.26px;font-size:16px;line-height:1;color:#ececec;white-space:pre">Amara_ShadowStep_Armor_Buff</div><div style="position:absolute;left:0;top:700px;width:478px;height:20px;background:#282c2f"></div><div style="position:absolute;left:31px;top:707px;width:6px;height:6px;border-radius:50%;background:#e4e4e4"></div><svg style="position:absolute;left:46px;top:702px" width="16" height="16"><circle cx="8" cy="8" r="7.2" stroke="#e8e8e8" stroke-width="1.3" fill="none"/><text x="8.1" y="11.4" text-anchor="middle" font-family="Liberation Sans" font-size="9.5" font-weight="400" fill="#e8e8e8">B</text></svg><div style="position:absolute;left:69.5px;top:703.26px;font-size:16px;line-height:1;color:#ececec;white-space:pre">Amara_ShadowStep_Flashbang_Debuff</div><div style="position:absolute;left:0;top:720px;width:478px;height:20px;background:#2c2f34"></div><div style="position:absolute;left:31px;top:727px;width:6px;height:6px;border-radius:50%;background:#e4e4e4"></div><svg style="position:absolute;left:46px;top:722px" width="16" height="16"><circle cx="8" cy="8" r="7.2" stroke="#e8e8e8" stroke-width="1.3" fill="none"/><text x="8.1" y="11.4" text-anchor="middle" font-family="Liberation Sans" font-size="9.5" font-weight="400" fill="#e8e8e8">B</text></svg><div style="position:absolute;left:69.5px;top:723.26px;font-size:16px;line-height:1;color:#ececec;white-space:pre">Amara_WeaponRico_BuffTargeted</div><div style="position:absolute;left:0;top:740px;width:478px;height:20px;background:#282c2f"></div><div style="position:absolute;left:31px;top:747px;width:6px;height:6px;border-radius:50%;background:#e4e4e4"></div><svg style="position:absolute;left:46px;top:742px" width="16" height="16"><circle cx="8" cy="8" r="7.2" stroke="#e8e8e8" stroke-width="1.3" fill="none"/><text x="8.1" y="11.4" text-anchor="middle" font-family="Liberation Sans" font-size="9.5" font-weight="400" fill="#e8e8e8">B</text></svg><div style="position:absolute;left:69.5px;top:743.26px;font-size:16px;line-height:1;color:#ececec;white-space:pre">Amara_WeaponRico_BuffTargetedPrimary</div></div><div style="position:absolute;left:489px;top:289px;width:1px;height:756px;background:#3f444b;"></div><div style="position:absolute;left:484px;top:291px;width:10px;height:71px;background:#ffffff;border-radius:2px;"></div><div style="position:absolute;left:511px;top:225px;width:598px;height:32px;background:#444a52;"></div><div style="position:absolute;left:519px;top:233.46px;font-size:16px;line-height:1;color:#ffffff;font-weight:700;white-space:pre;">Title</div><div style="position:absolute;left:511px;top:257px;width:598px;height:32px;background:#3b4048;"></div><div style="position:absolute;left:511px;top:289px;width:598px;height:756px;background:#2c2f34;"></div><div style="position:absolute;left:511px;top:289px;width:598px;height:756px;overflow:hidden"><div style="position:absolute;left:110px;top:98px;width:250px;height:570px;border-radius:22px;box-shadow:0 0 24px 6px rgba(30,82,228,0.95), 0 0 8px 3px rgba(38,88,238,0.9)"></div><div style="position:absolute;left:110px;top:98px;width:240px;height:560px;border:5px solid #30defe;border-radius:22px;background:linear-gradient(180deg,#474c54 0%,#638596 100%)"></div></div><div style="position:absolute;left:546.0px;width:400px;text-align:center;top:407.96px;font-size:15.4px;line-height:1;color:#ffffff;font-weight:700;white-space:pre">BUFF</div><div style="position:absolute;left:546.0px;width:400px;text-align:center;top:431.83px;font-size:13.2px;line-height:1;color:#7cc9e4;font-weight:400;white-space:pre">Afterburners_Buff</div><svg style="position:absolute;left:854px;top:443px;" width="12" height="14" viewBox="0 0 12 14"><path d="M0 0H4L9 5H12V9H9L4 14H0Z" fill="rgba(235,240,244,0.90)"/></svg><div style="position:absolute;left:871px;top:447px;width:79px;height:5px;background:#ffffff;"></div><div style="position:absolute;left:923px;top:447px;width:27px;height:27px;background:#ffffff;"></div><div style="position:absolute;left:925px;top:449px;width:20.6px;height:20.6px;border:1.2px solid #111;border-radius:5px"></div><svg style="position:absolute;left:923px;top:447px;" width="27" height="27" viewBox="0 0 27 27"><path d="M13.5 7.5V19.5M7.5 13.5H19.5" stroke="#111" stroke-width="1.1"/></svg><div style="position:absolute;left:877.5px;top:429.86px;font-size:10.8px;line-height:1;color:#ffffff;font-weight:400;white-space:pre;">DISPLAY_AREA_EFFECT</div><svg style="position:absolute;left:854px;top:538px;" width="12" height="14" viewBox="0 0 12 14"><path d="M0 0H4L9 5H12V9H9L4 14H0Z" fill="rgba(235,240,244,0.83)"/></svg><div style="position:absolute;left:871px;top:542px;width:79px;height:5px;background:#ffffff;"></div><div style="position:absolute;left:923px;top:542px;width:27px;height:27px;background:#ffffff;"></div><div style="position:absolute;left:925px;top:544px;width:20.6px;height:20.6px;border:1.2px solid #111;border-radius:5px"></div><svg style="position:absolute;left:923px;top:542px;" width="27" height="27" viewBox="0 0 27 27"><path d="M13.5 7.5V19.5M7.5 13.5H19.5" stroke="#111" stroke-width="1.1"/></svg><div style="position:absolute;left:877.5px;top:524.86px;font-size:10.8px;line-height:1;color:#ffffff;font-weight:400;white-space:pre;">EFFECT_EXPIRE</div><svg style="position:absolute;left:854px;top:633px;" width="12" height="14" viewBox="0 0 12 14"><path d="M0 0H4L9 5H12V9H9L4 14H0Z" fill="rgba(235,240,244,0.75)"/></svg><div style="position:absolute;left:871px;top:637px;width:79px;height:5px;background:#ffffff;"></div><div style="position:absolute;left:923px;top:637px;width:27px;height:27px;background:#ffffff;"></div><div style="position:absolute;left:925px;top:639px;width:20.6px;height:20.6px;border:1.2px solid #111;border-radius:5px"></div><svg style="position:absolute;left:923px;top:637px;" width="27" height="27" viewBox="0 0 27 27"><path d="M13.5 7.5V19.5M7.5 13.5H19.5" stroke="#111" stroke-width="1.1"/></svg><div style="position:absolute;left:877.5px;top:619.86px;font-size:10.8px;line-height:1;color:#ffffff;font-weight:400;white-space:pre;">EFFECT_FINAL</div><svg style="position:absolute;left:854px;top:728px;" width="12" height="14" viewBox="0 0 12 14"><path d="M0 0H4L9 5H12V9H9L4 14H0Z" fill="rgba(235,240,244,0.68)"/></svg><div style="position:absolute;left:871px;top:732px;width:79px;height:5px;background:#ffffff;"></div><div style="position:absolute;left:923px;top:732px;width:27px;height:27px;background:#ffffff;"></div><div style="position:absolute;left:925px;top:734px;width:20.6px;height:20.6px;border:1.2px solid #111;border-radius:5px"></div><svg style="position:absolute;left:923px;top:732px;" width="27" height="27" viewBox="0 0 27 27"><path d="M13.5 7.5V19.5M7.5 13.5H19.5" stroke="#111" stroke-width="1.1"/></svg><div style="position:absolute;left:877.5px;top:714.86px;font-size:10.8px;line-height:1;color:#ffffff;font-weight:400;white-space:pre;">EFFECT_INITIAL</div><svg style="position:absolute;left:854px;top:823px;" width="12" height="14" viewBox="0 0 12 14"><path d="M0 0H4L9 5H12V9H9L4 14H0Z" fill="rgba(235,240,244,0.60)"/></svg><div style="position:absolute;left:871px;top:827px;width:79px;height:5px;background:#ffffff;"></div><div style="position:absolute;left:923px;top:827px;width:27px;height:27px;background:#ffffff;"></div><div style="position:absolute;left:925px;top:829px;width:20.6px;height:20.6px;border:1.2px solid #111;border-radius:5px"></div><svg style="position:absolute;left:923px;top:827px;" width="27" height="27" viewBox="0 0 27 27"><path d="M13.5 7.5V19.5M7.5 13.5H19.5" stroke="#111" stroke-width="1.1"/></svg><div style="position:absolute;left:877.5px;top:809.86px;font-size:10.8px;line-height:1;color:#ffffff;font-weight:400;white-space:pre;">EFFECT_PERIODIC</div><svg style="position:absolute;left:854px;top:918px;" width="12" height="14" viewBox="0 0 12 14"><path d="M0 0H4L9 5H12V9H9L4 14H0Z" fill="rgba(235,240,244,0.53)"/></svg><div style="position:absolute;left:871px;top:922px;width:79px;height:5px;background:#ffffff;"></div><div style="position:absolute;left:923px;top:922px;width:27px;height:27px;background:#ffffff;"></div><div style="position:absolute;left:925px;top:924px;width:20.6px;height:20.6px;border:1.2px solid #111;border-radius:5px"></div><svg style="position:absolute;left:923px;top:922px;" width="27" height="27" viewBox="0 0 27 27"><path d="M13.5 7.5V19.5M7.5 13.5H19.5" stroke="#111" stroke-width="1.1"/></svg><div style="position:absolute;left:877.5px;top:904.86px;font-size:10.8px;line-height:1;color:#ffffff;font-weight:400;white-space:pre;">EFFECT_REFRESH</div><div style="position:absolute;left:1120px;top:225px;width:797px;height:32px;background:#444a52;"></div><div style="position:absolute;left:1128px;top:232.63px;font-size:15.8px;line-height:1;color:#ffffff;font-weight:700;white-space:pre;">Node Editor</div><div style="position:absolute;left:1120px;top:257px;width:797px;height:788px;background:#2c2f34;"></div><div style="position:absolute;left:1120px;top:257px;width:797px;height:788px;overflow:hidden"><div style="position:absolute;left:40px;top:9.49px;font-size:13.6px;line-height:1;color:#b4c4d4;font-weight:400;white-space:pre">Afterburners_Buff</div><svg style="position:absolute;left:24px;top:11px" width="10" height="10"><rect x="0.5" y="0.5" width="9" height="9" stroke="#5b6670" fill="none"/><path d="M2.3 5H7.7" stroke="#5b6670" stroke-width="2"/></svg><div style="position:absolute;left:0px;top:32px;width:781px;height:2px;background:#26292d;"></div><div style="position:absolute;left:388px;top:0px;width:2px;height:788px;background:#26292d;"></div><div style="position:absolute;left:60px;top:80.49px;font-size:13.6px;line-height:1;color:#c4c8cc;font-weight:400;white-space:pre">id</div><div style="position:absolute;left:394px;top:40px;width:334px;height:21px;background:#222528;border-radius:5px;"></div><div style="position:absolute;left:399px;top:42.99px;font-size:13.6px;line-height:1;color:#bfcbd7;font-weight:400;white-space:pre">Afterburners_Buff</div><svg style="position:absolute;left:732px;top:42px" width="18" height="17"><path d="M7.5 3.3H4Q1.8 3.3 1.8 5.5V13Q1.8 15.2 4 15.2H11.3Q13.5 15.2 13.5 13V9.5" stroke="#5b6670" stroke-width="1.4" fill="none"/><path d="M5.2 12.2L6 9.2L14.3 0.9L16.6 3.2L8.3 11.5Z" fill="#5b6670"/><path d="M6 9.2L8.3 11.5" stroke="#2a2d32" stroke-width="0.6"/></svg><svg style="position:absolute;left:757px;top:42px" width="16" height="17"><path d="M3 3.3H13" stroke="#5b6670" stroke-width="3.6" stroke-linecap="round"/><path d="M4.2 6V14.2M7.9 6V14.2M11.6 6V14.2" stroke="#5b6670" stroke-width="1.7" stroke-linecap="round"/></svg><div style="position:absolute;left:394px;top:65px;width:358px;height:22px;background:#222528;border-radius:5px;"></div><div style="position:absolute;left:399px;top:65px;width:343px;height:22px;overflow:hidden"><div style="position:absolute;left:0;top:2.99px;font-size:13.6px;letter-spacing:-0.18px;line-height:1;color:#bfcbd7;white-space:pre">../../../Stormgate/Content/data/snow_facts/pegasus/archetypes/buffs</div></div><svg style="position:absolute;left:757px;top:70px" width="16" height="13"><path d="M2 2H6L7.5 0.5H14V10H2Z" fill="#5b6670"/><path d="M0 4H13L15.5 12.5H1.5Z" fill="#6b7882"/></svg><div style="position:absolute;left:394px;top:91px;width:358px;height:22px;background:#222528;border-radius:5px;"></div><div style="position:absolute;left:399px;top:93.99px;font-size:13.6px;line-height:1;color:#bfcbd7;font-weight:400;white-space:pre">pegasus_core</div><svg style="position:absolute;left:757px;top:96px" width="16" height="13"><path d="M2 2H6L7.5 0.5H14V10H2Z" fill="#5b6670"/><path d="M0 4H13L15.5 12.5H1.5Z" fill="#6b7882"/></svg><div style="position:absolute;left:394px;top:114px;width:362px;height:22px;background:#222528;border-radius:5px;"></div><div style="position:absolute;left:399px;top:116.99px;font-size:13.6px;line-height:1;color:#bfcbd7;font-weight:400;white-space:pre">Use as Template</div><div style="position:absolute;left:757px;top:117px;width:16px;height:16px;background:#202326;border-radius:3px;"></div><div style="position:absolute;left:0px;top:140px;width:781px;height:2px;background:#26292d;"></div><div style="position:absolute;left:60px;top:151.49px;font-size:13.6px;line-height:1;color:#c4c8cc;font-weight:400;white-space:pre">based_on</div><div style="position:absolute;left:394px;top:145.7px;width:360px;height:24.2px;background:#222528;border-radius:5px;"></div><div style="position:absolute;left:399.5px;top:150.79px;font-size:13.6px;line-height:1;color:#bfcbd7;font-weight:400;white-space:pre">Buff</div><svg style="position:absolute;left:737px;top:155.5px" width="10" height="6"><path d="M0.8 0.5H9.2L5 4.8Z" fill="#a9b8c7"/></svg><svg style="position:absolute;left:758px;top:153px" width="16" height="12"><path d="M1 5Q8 -3.2 15 5Q8 13.2 1 5Z" fill="#5b6670"/><circle cx="8" cy="5" r="2.9" fill="#2a2d32"/><circle cx="8" cy="5" r="1.3" fill="#5b6670"/></svg><div style="position:absolute;left:0px;top:174px;width:781px;height:2px;background:#26292d;"></div><div style="position:absolute;left:60px;top:185.49px;font-size:13.6px;line-height:1;color:#38a4de;font-weight:400;white-space:pre">alignment</div><svg style="position:absolute;left:368px;top:185px" width="16" height="15"><path d="M5 3.5H14.2V12.1H4" stroke="#5b6670" stroke-width="1.8" fill="none"/><path d="M0.6 3.5L6 0V7Z" fill="#5b6670"/></svg><div style="position:absolute;left:394px;top:179.7px;width:360px;height:24.2px;background:#222528;border-radius:5px;"></div><div style="position:absolute;left:399.5px;top:184.79px;font-size:13.6px;line-height:1;color:#bfcbd7;font-weight:400;white-space:pre">Neutral</div><svg style="position:absolute;left:737px;top:189.5px" width="10" height="6"><path d="M0.8 0.5H9.2L5 4.8Z" fill="#a9b8c7"/></svg><div style="position:absolute;left:0px;top:208px;width:781px;height:2px;background:#26292d;"></div><div style="position:absolute;left:60px;top:219.49px;font-size:13.6px;line-height:1;color:#38a4de;font-weight:400;white-space:pre">applied_tags</div><svg style="position:absolute;left:44px;top:221px" width="10" height="10"><rect x="0.5" y="0.5" width="9" height="9" stroke="#5b6670" fill="none"/><path d="M5 2.5V7.5M2.5 5H7.5" stroke="#5b6670" stroke-width="1.6"/></svg><svg style="position:absolute;left:368px;top:219px" width="16" height="15"><path d="M5 3.5H14.2V12.1H4" stroke="#5b6670" stroke-width="1.8" fill="none"/><path d="M0.6 3.5L6 0V7Z" fill="#5b6670"/></svg><div style="position:absolute;left:394px;top:218px;width:16px;height:16px;background:#59646d;border-radius:4.5px;"></div><svg style="position:absolute;left:394px;top:218px" width="16" height="16"><path d="M8 4.2V11.8M4.2 8H11.8" stroke="#2a2d32" stroke-width="2"/></svg><div style="position:absolute;left:0px;top:242px;width:781px;height:2px;background:#26292d;"></div><div style="position:absolute;left:60px;top:253.49px;font-size:13.6px;line-height:1;color:#c4c8cc;font-weight:400;white-space:pre">applied_tags_persist</div><svg style="position:absolute;left:44px;top:255px" width="10" height="10"><rect x="0.5" y="0.5" width="9" height="9" stroke="#5b6670" fill="none"/><path d="M5 2.5V7.5M2.5 5H7.5" stroke="#5b6670" stroke-width="1.6"/></svg><div style="position:absolute;left:394px;top:252px;width:16px;height:16px;background:#59646d;border-radius:4.5px;"></div><svg style="position:absolute;left:394px;top:252px" width="16" height="16"><path d="M8 4.2V11.8M4.2 8H11.8" stroke="#2a2d32" stroke-width="2"/></svg><div style="position:absolute;left:0px;top:276px;width:781px;height:2px;background:#26292d;"></div><div style="position:absolute;left:60px;top:287.49px;font-size:13.6px;line-height:1;color:#38a4de;font-weight:400;white-space:pre">buff_tags</div><svg style="position:absolute;left:44px;top:289px" width="10" height="10"><rect x="0.5" y="0.5" width="9" height="9" stroke="#5b6670" fill="none"/><path d="M5 2.5V7.5M2.5 5H7.5" stroke="#5b6670" stroke-width="1.6"/></svg><svg style="position:absolute;left:368px;top:287px" width="16" height="15"><path d="M5 3.5H14.2V12.1H4" stroke="#5b6670" stroke-width="1.8" fill="none"/><path d="M0.6 3.5L6 0V7Z" fill="#5b6670"/></svg><div style="position:absolute;left:394px;top:286px;width:16px;height:16px;background:#59646d;border-radius:4.5px;"></div><svg style="position:absolute;left:394px;top:286px" width="16" height="16"><path d="M8 4.2V11.8M4.2 8H11.8" stroke="#2a2d32" stroke-width="2"/></svg><div style="position:absolute;left:0px;top:310px;width:781px;height:2px;background:#26292d;"></div><div style="position:absolute;left:60px;top:321.49px;font-size:13.6px;line-height:1;color:#38a4de;font-weight:400;white-space:pre">buff_visuals</div><svg style="position:absolute;left:368px;top:321px" width="16" height="15"><path d="M5 3.5H14.2V12.1H4" stroke="#5b6670" stroke-width="1.8" fill="none"/><path d="M0.6 3.5L6 0V7Z" fill="#5b6670"/></svg><div style="position:absolute;left:394px;top:315.70000000000005px;width:360px;height:24.2px;background:#222528;border-radius:5px;"></div><div style="position:absolute;left:399.5px;top:320.79px;font-size:13.6px;line-height:1;color:#bfcbd7;font-weight:400;white-space:pre">BP_FX_Afterburners</div><svg style="position:absolute;left:737px;top:325.5px" width="10" height="6"><path d="M0.8 0.5H9.2L5 4.8Z" fill="#a9b8c7"/></svg><div style="position:absolute;left:0px;top:344px;width:781px;height:2px;background:#26292d;"></div><div style="position:absolute;left:60px;top:355.49px;font-size:13.6px;line-height:1;color:#c4c8cc;font-weight:400;white-space:pre">display_area_effect</div><svg style="position:absolute;left:44px;top:357px" width="10" height="10"><rect x="0.5" y="0.5" width="9" height="9" stroke="#5b6670" fill="none"/><path d="M5 2.5V7.5M2.5 5H7.5" stroke="#5b6670" stroke-width="1.6"/></svg><div style="position:absolute;left:394px;top:349.70000000000005px;width:360px;height:24.2px;background:#222528;border-radius:5px;"></div><div style="position:absolute;left:399.5px;top:354.79px;font-size:13.6px;line-height:1;color:#bfcbd7;font-weight:400;white-space:pre">emptyRef</div><svg style="position:absolute;left:737px;top:359.5px" width="10" height="6"><path d="M0.8 0.5H9.2L5 4.8Z" fill="#a9b8c7"/></svg><svg style="position:absolute;left:758px;top:357px" width="16" height="12"><path d="M1 5Q8 -3.2 15 5Q8 13.2 1 5Z" fill="#5b6670"/><circle cx="8" cy="5" r="2.9" fill="#2a2d32"/><circle cx="8" cy="5" r="1.3" fill="#5b6670"/></svg><svg style="position:absolute;left:777px;top:355.29999999999995px" width="5" height="6"><path d="M4 0.3A2.45 2.45 0 0 0 4 5.2Z" fill="#5b6670"/></svg><div style="position:absolute;left:0px;top:378px;width:781px;height:2px;background:#26292d;"></div><div style="position:absolute;left:60px;top:389.49px;font-size:13.6px;line-height:1;color:#38a4de;font-weight:400;white-space:pre">duration</div><svg style="position:absolute;left:368px;top:389px" width="16" height="15"><path d="M5 3.5H14.2V12.1H4" stroke="#5b6670" stroke-width="1.8" fill="none"/><path d="M0.6 3.5L6 0V7Z" fill="#5b6670"/></svg><div style="position:absolute;left:394px;top:383px;width:360px;height:24px;background:#222528;border-radius:5px;"></div><div style="position:absolute;left:400.5px;top:388.49px;font-size:13.6px;line-height:1;color:#bfcbd7;font-weight:400;white-space:pre">15,0</div><svg style="position:absolute;left:742px;top:392px" width="9" height="9"><path d="M3 0H8V5ZM0 3V8H5Z" fill="#a9b9c8"/></svg><div style="position:absolute;left:0px;top:412px;width:781px;height:2px;background:#26292d;"></div><div style="position:absolute;left:60px;top:423.49px;font-size:13.6px;line-height:1;color:#c4c8cc;font-weight:400;white-space:pre">effect_expire</div><svg style="position:absolute;left:44px;top:425px" width="10" height="10"><rect x="0.5" y="0.5" width="9" height="9" stroke="#5b6670" fill="none"/><path d="M5 2.5V7.5M2.5 5H7.5" stroke="#5b6670" stroke-width="1.6"/></svg><div style="position:absolute;left:394px;top:417.70000000000005px;width:360px;height:24.2px;background:#222528;border-radius:5px;"></div><div style="position:absolute;left:399.5px;top:422.79px;font-size:13.6px;line-height:1;color:#bfcbd7;font-weight:400;white-space:pre">emptyRef</div><svg style="position:absolute;left:737px;top:427.5px" width="10" height="6"><path d="M0.8 0.5H9.2L5 4.8Z" fill="#a9b8c7"/></svg><svg style="position:absolute;left:758px;top:425px" width="16" height="12"><path d="M1 5Q8 -3.2 15 5Q8 13.2 1 5Z" fill="#5b6670"/><circle cx="8" cy="5" r="2.9" fill="#2a2d32"/><circle cx="8" cy="5" r="1.3" fill="#5b6670"/></svg><svg style="position:absolute;left:777px;top:423.29999999999995px" width="5" height="6"><path d="M4 0.3A2.45 2.45 0 0 0 4 5.2Z" fill="#5b6670"/></svg><div style="position:absolute;left:0px;top:446px;width:781px;height:2px;background:#26292d;"></div><div style="position:absolute;left:60px;top:457.49px;font-size:13.6px;line-height:1;color:#c4c8cc;font-weight:400;white-space:pre">effect_final</div><svg style="position:absolute;left:44px;top:459px" width="10" height="10"><rect x="0.5" y="0.5" width="9" height="9" stroke="#5b6670" fill="none"/><path d="M5 2.5V7.5M2.5 5H7.5" stroke="#5b6670" stroke-width="1.6"/></svg><div style="position:absolute;left:394px;top:451.70000000000005px;width:360px;height:24.2px;background:#222528;border-radius:5px;"></div><div style="position:absolute;left:399.5px;top:456.79px;font-size:13.6px;line-height:1;color:#bfcbd7;font-weight:400;white-space:pre">emptyRef</div><svg style="position:absolute;left:737px;top:461.5px" width="10" height="6"><path d="M0.8 0.5H9.2L5 4.8Z" fill="#a9b8c7"/></svg><svg style="position:absolute;left:758px;top:459px" width="16" height="12"><path d="M1 5Q8 -3.2 15 5Q8 13.2 1 5Z" fill="#5b6670"/><circle cx="8" cy="5" r="2.9" fill="#2a2d32"/><circle cx="8" cy="5" r="1.3" fill="#5b6670"/></svg><svg style="position:absolute;left:777px;top:457.29999999999995px" width="5" height="6"><path d="M4 0.3A2.45 2.45 0 0 0 4 5.2Z" fill="#5b6670"/></svg><div style="position:absolute;left:0px;top:480px;width:781px;height:2px;background:#26292d;"></div><div style="position:absolute;left:60px;top:491.49px;font-size:13.6px;line-height:1;color:#c4c8cc;font-weight:400;white-space:pre">effect_initial</div><svg style="position:absolute;left:44px;top:493px" width="10" height="10"><rect x="0.5" y="0.5" width="9" height="9" stroke="#5b6670" fill="none"/><path d="M5 2.5V7.5M2.5 5H7.5" stroke="#5b6670" stroke-width="1.6"/></svg><div style="position:absolute;left:394px;top:485.70000000000005px;width:360px;height:24.2px;background:#222528;border-radius:5px;"></div><div style="position:absolute;left:399.5px;top:490.79px;font-size:13.6px;line-height:1;color:#bfcbd7;font-weight:400;white-space:pre">emptyRef</div><svg style="position:absolute;left:737px;top:495.5px" width="10" height="6"><path d="M0.8 0.5H9.2L5 4.8Z" fill="#a9b8c7"/></svg><svg style="position:absolute;left:758px;top:493px" width="16" height="12"><path d="M1 5Q8 -3.2 15 5Q8 13.2 1 5Z" fill="#5b6670"/><circle cx="8" cy="5" r="2.9" fill="#2a2d32"/><circle cx="8" cy="5" r="1.3" fill="#5b6670"/></svg><svg style="position:absolute;left:777px;top:491.29999999999995px" width="5" height="6"><path d="M4 0.3A2.45 2.45 0 0 0 4 5.2Z" fill="#5b6670"/></svg><div style="position:absolute;left:0px;top:514px;width:781px;height:2px;background:#26292d;"></div><div style="position:absolute;left:60px;top:525.49px;font-size:13.6px;line-height:1;color:#c4c8cc;font-weight:400;white-space:pre">effect_periodic</div><svg style="position:absolute;left:44px;top:527px" width="10" height="10"><rect x="0.5" y="0.5" width="9" height="9" stroke="#5b6670" fill="none"/><path d="M5 2.5V7.5M2.5 5H7.5" stroke="#5b6670" stroke-width="1.6"/></svg><div style="position:absolute;left:394px;top:519.7px;width:360px;height:24.2px;background:#222528;border-radius:5px;"></div><div style="position:absolute;left:399.5px;top:524.79px;font-size:13.6px;line-height:1;color:#bfcbd7;font-weight:400;white-space:pre">emptyRef</div><svg style="position:absolute;left:737px;top:529.5px" width="10" height="6"><path d="M0.8 0.5H9.2L5 4.8Z" fill="#a9b8c7"/></svg><svg style="position:absolute;left:758px;top:527px" width="16" height="12"><path d="M1 5Q8 -3.2 15 5Q8 13.2 1 5Z" fill="#5b6670"/><circle cx="8" cy="5" r="2.9" fill="#2a2d32"/><circle cx="8" cy="5" r="1.3" fill="#5b6670"/></svg><svg style="position:absolute;left:777px;top:525.3px" width="5" height="6"><path d="M4 0.3A2.45 2.45 0 0 0 4 5.2Z" fill="#5b6670"/></svg><div style="position:absolute;left:0px;top:548px;width:781px;height:2px;background:#26292d;"></div><div style="position:absolute;left:60px;top:559.49px;font-size:13.6px;line-height:1;color:#c4c8cc;font-weight:400;white-space:pre">effect_refresh</div><svg style="position:absolute;left:44px;top:561px" width="10" height="10"><rect x="0.5" y="0.5" width="9" height="9" stroke="#5b6670" fill="none"/><path d="M5 2.5V7.5M2.5 5H7.5" stroke="#5b6670" stroke-width="1.6"/></svg><div style="position:absolute;left:394px;top:553.7px;width:360px;height:24.2px;background:#222528;border-radius:5px;"></div><div style="position:absolute;left:399.5px;top:558.79px;font-size:13.6px;line-height:1;color:#bfcbd7;font-weight:400;white-space:pre">emptyRef</div><svg style="position:absolute;left:737px;top:563.5px" width="10" height="6"><path d="M0.8 0.5H9.2L5 4.8Z" fill="#a9b8c7"/></svg><svg style="position:absolute;left:758px;top:561px" width="16" height="12"><path d="M1 5Q8 -3.2 15 5Q8 13.2 1 5Z" fill="#5b6670"/><circle cx="8" cy="5" r="2.9" fill="#2a2d32"/><circle cx="8" cy="5" r="1.3" fill="#5b6670"/></svg><svg style="position:absolute;left:777px;top:559.3px" width="5" height="6"><path d="M4 0.3A2.45 2.45 0 0 0 4 5.2Z" fill="#5b6670"/></svg><div style="position:absolute;left:0px;top:582px;width:781px;height:2px;background:#26292d;"></div><div style="position:absolute;left:60px;top:593.49px;font-size:13.6px;line-height:1;color:#c4c8cc;font-weight:400;white-space:pre">flags</div><svg style="position:absolute;left:44px;top:595px" width="10" height="10"><rect x="0.5" y="0.5" width="9" height="9" stroke="#5b6670" fill="none"/><path d="M5 2.5V7.5M2.5 5H7.5" stroke="#5b6670" stroke-width="1.6"/></svg><div style="position:absolute;left:0px;top:616px;width:781px;height:2px;background:#26292d;"></div><div style="position:absolute;left:60px;top:627.49px;font-size:13.6px;line-height:1;color:#c4c8cc;font-weight:400;white-space:pre">height</div><svg style="position:absolute;left:44px;top:629px" width="10" height="10"><rect x="0.5" y="0.5" width="9" height="9" stroke="#5b6670" fill="none"/><path d="M5 2.5V7.5M2.5 5H7.5" stroke="#5b6670" stroke-width="1.6"/></svg><div style="position:absolute;left:0px;top:650px;width:781px;height:2px;background:#26292d;"></div><div style="position:absolute;left:60px;top:661.49px;font-size:13.6px;line-height:1;color:#38a4de;font-weight:400;white-space:pre">icon</div><svg style="position:absolute;left:368px;top:661px" width="16" height="15"><path d="M5 3.5H14.2V12.1H4" stroke="#5b6670" stroke-width="1.8" fill="none"/><path d="M0.6 3.5L6 0V7Z" fill="#5b6670"/></svg><div style="position:absolute;left:394px;top:655.7px;width:360px;height:24.2px;background:#222528;border-radius:5px;"></div><div style="position:absolute;left:399.5px;top:660.79px;font-size:13.6px;line-height:1;color:#bfcbd7;font-weight:400;white-space:pre">UI_Icons_Abilities_Afterburners</div><svg style="position:absolute;left:737px;top:665.5px" width="10" height="6"><path d="M0.8 0.5H9.2L5 4.8Z" fill="#a9b8c7"/></svg><div style="position:absolute;left:0px;top:684px;width:781px;height:2px;background:#26292d;"></div><div style="position:absolute;left:60px;top:695.49px;font-size:13.6px;line-height:1;color:#38a4de;font-weight:400;white-space:pre">modifiers</div><svg style="position:absolute;left:44px;top:697px" width="10" height="10"><rect x="0.5" y="0.5" width="9" height="9" stroke="#5b6670" fill="none"/><path d="M5 2.5V7.5M2.5 5H7.5" stroke="#5b6670" stroke-width="1.6"/></svg><svg style="position:absolute;left:368px;top:695px" width="16" height="15"><path d="M5 3.5H14.2V12.1H4" stroke="#5b6670" stroke-width="1.8" fill="none"/><path d="M0.6 3.5L6 0V7Z" fill="#5b6670"/></svg><div style="position:absolute;left:394px;top:694px;width:16px;height:16px;background:#59646d;border-radius:4.5px;"></div><svg style="position:absolute;left:394px;top:694px" width="16" height="16"><path d="M8 4.2V11.8M4.2 8H11.8" stroke="#2a2d32" stroke-width="2"/></svg><div style="position:absolute;left:0px;top:718px;width:781px;height:2px;background:#26292d;"></div><div style="position:absolute;left:394px;top:723.99px;font-size:13.6px;line-height:1;color:#c9d3dd;font-weight:400;white-space:pre">"Форсажные камеры"</div><div style="position:absolute;left:394px;top:741px;width:360px;height:24px;background:#222528;border-radius:5px;"></div><div style="position:absolute;left:399.5px;top:745.99px;font-size:13.6px;line-height:1;color:#bfcbd7;font-weight:400;white-space:pre">Buff_name_Afterburners_Buff</div><svg style="position:absolute;left:737px;top:751.5px" width="10" height="6"><path d="M0.8 0.5H9.2L5 4.8Z" fill="#a9b8c7"/></svg><div style="position:absolute;left:758px;top:746.49px;font-size:13.6px;line-height:1;color:#bfcbd7;font-weight:400;white-space:pre">ID</div><div style="position:absolute;left:394px;top:769px;width:360px;height:24px;background:#222528;border-radius:5px;"></div><div style="position:absolute;left:399.5px;top:773.99px;font-size:13.6px;line-height:1;color:#bfcbd7;font-weight:400;white-space:pre">Default (pegasus_core)</div><svg style="position:absolute;left:737px;top:779.5px" width="10" height="6"><path d="M0.8 0.5H9.2L5 4.8Z" fill="#a9b8c7"/></svg><div style="position:absolute;left:758px;top:774.49px;font-size:13.6px;line-height:1;color:#bfcbd7;font-weight:400;white-space:pre">NS</div><svg style="position:absolute;left:368px;top:785px" width="16" height="15"><path d="M5 3.5H14.2V12.1H4" stroke="#5b6670" stroke-width="1.8" fill="none"/><path d="M0.6 3.5L6 0V7Z" fill="#5b6670"/></svg><div style="position:absolute;left:789px;top:0px;width:1px;height:788px;background:#3a3f45;"></div></div><div style="position:absolute;left:1903px;top:259px;width:12px;height:477px;background:#111315;border-radius:2px;"></div><div style="position:absolute;left:1904px;top:260px;width:10px;height:475px;background:#ffffff;border-radius:2px;"></div><div style="position:absolute;left:1256px;top:771px;width:316px;height:34px;background:#0c0c0c;"></div><div style="position:absolute;left:1258px;top:771px;width:312px;height:32px;background:#ececec;"></div><div style="position:absolute;left:1267px;top:780.67px;font-size:12.2px;line-height:1;color:#202020;font-weight:400;white-space:pre;">The game effect that runs when the buff is first applied</div><div style="position:absolute;left:0px;top:1048px;width:1920px;height:32px;background:#444a52;"></div><div style="position:absolute;left:4px;top:1048px;width:1px;height:32px;background:#3e434a;"></div><div style="position:absolute;left:1646px;top:1048px;width:1px;height:32px;background:#3e434a;"></div><div style="position:absolute;left:1657px;top:1058.16px;font-size:13.4px;line-height:1;color:#c4c7ca;font-weight:400;white-space:pre;">Прокладывание пути</div><svg style="position:absolute;left:1796px;top:1058px;" width="14" height="12" viewBox="0 0 14 12"><path d="M1 6L5 10L13 1.5" stroke="#c4c7ca" stroke-width="2" fill="none"/></svg><div style="position:absolute;left:1828px;top:1048px;width:2px;height:32px;background:#25282c;"></div><div style="position:absolute;left:1838px;top:1057px;width:3px;height:12px;background:#ffffff;"></div><div style="position:absolute;left:1844px;top:1057px;width:3px;height:12px;background:#ffffff;"></div><svg style="position:absolute;left:1859px;top:1057px;" width="12" height="12" viewBox="0 0 12 12"><circle cx="6" cy="6" r="2.7" fill="#fff"/><path d="M9.60 6.00L11.40 6.00" stroke="#fff" stroke-width="1.3"/><path d="M8.55 8.55L9.82 9.82" stroke="#fff" stroke-width="1.3"/><path d="M6.00 9.60L6.00 11.40" stroke="#fff" stroke-width="1.3"/><path d="M3.45 8.55L2.18 9.82" stroke="#fff" stroke-width="1.3"/><path d="M2.40 6.00L0.60 6.00" stroke="#fff" stroke-width="1.3"/><path d="M3.45 3.45L2.18 2.18" stroke="#fff" stroke-width="1.3"/><path d="M6.00 2.40L6.00 0.60" stroke="#fff" stroke-width="1.3"/><path d="M8.55 3.45L9.82 2.18" stroke="#fff" stroke-width="1.3"/></svg><div style="position:absolute;left:1879px;top:1055.49px;font-size:13.6px;line-height:1;color:#d8dadc;font-weight:400;white-space:pre;">07:57</div><div style="position:absolute;left:1835px;top:1072px;width:79px;height:2px;background:#121416;"></div><div style="position:absolute;left:1835px;top:1072px;width:26px;height:2px;background:#2d86f0;"></div>
</body></html>
